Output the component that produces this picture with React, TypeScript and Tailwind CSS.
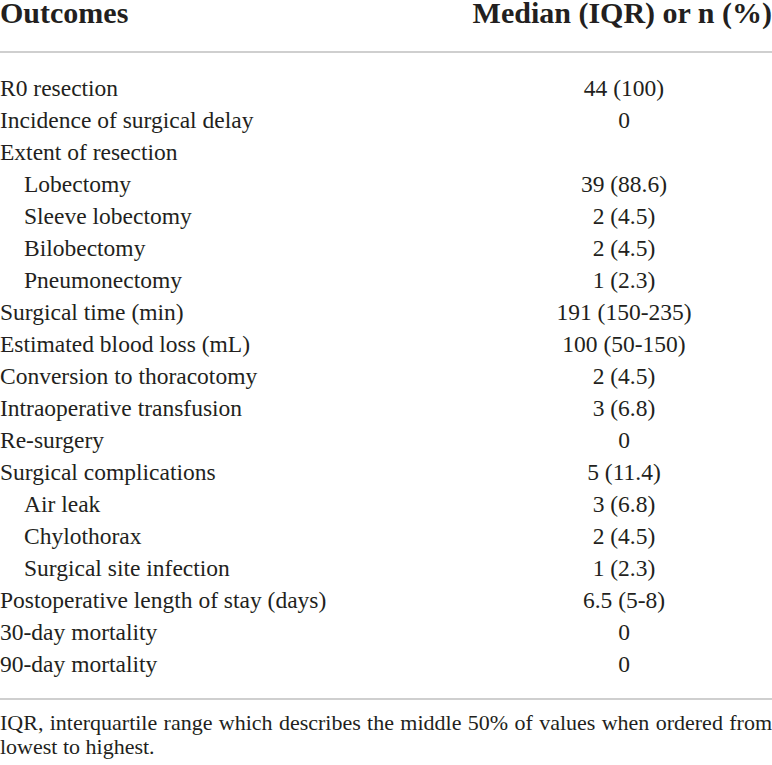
const rows: { label: string; value: string; indent?: boolean }[] = [
  { label: "R0 resection", value: "44 (100)" },
  { label: "Incidence of surgical delay", value: "0" },
  { label: "Extent of resection", value: "" },
  { label: "Lobectomy", value: "39 (88.6)", indent: true },
  { label: "Sleeve lobectomy", value: "2 (4.5)", indent: true },
  { label: "Bilobectomy", value: "2 (4.5)", indent: true },
  { label: "Pneumonectomy", value: "1 (2.3)", indent: true },
  { label: "Surgical time (min)", value: "191 (150-235)" },
  { label: "Estimated blood loss (mL)", value: "100 (50-150)" },
  { label: "Conversion to thoracotomy", value: "2 (4.5)" },
  { label: "Intraoperative transfusion", value: "3 (6.8)" },
  { label: "Re-surgery", value: "0" },
  { label: "Surgical complications", value: "5 (11.4)" },
  { label: "Air leak", value: "3 (6.8)", indent: true },
  { label: "Chylothorax", value: "2 (4.5)", indent: true },
  { label: "Surgical site infection", value: "1 (2.3)", indent: true },
  { label: "Postoperative length of stay (days)", value: "6.5 (5-8)" },
  { label: "30-day mortality", value: "0" },
  { label: "90-day mortality", value: "0" },
];

export default function App() {
  return (
    <div className="w-[772px] bg-white text-[#231f20] font-['Liberation_Serif',serif]">
      {/* Header */}
      <div className="flex justify-between text-[30px] font-bold leading-[26px] h-[51px] whitespace-nowrap">
        <div>Outcomes</div>
        <div>Median (IQR) or n (%)</div>
      </div>
      <div className="h-[2px] bg-[#cfcfcf]" />

      {/* Body */}
      <div className="pt-[18px] pb-[19px] text-[23.5px]">
        {rows.map((r) => (
          <div key={r.label} className="grid grid-cols-[1fr_296px] h-[32px] items-center">
            <div className={r.indent ? "pl-[24px]" : ""}>{r.label}</div>
            <div className="text-center">{r.value}</div>
          </div>
        ))}
      </div>
      <div className="h-[2px] bg-[#cfcfcf]" />

      {/* Footnote */}
      <p className="pt-[11px] text-[22px] leading-[24px] text-justify">
        IQR, interquartile range which describes the middle 50% of values when ordered from lowest to highest.
      </p>
    </div>
  );
}
